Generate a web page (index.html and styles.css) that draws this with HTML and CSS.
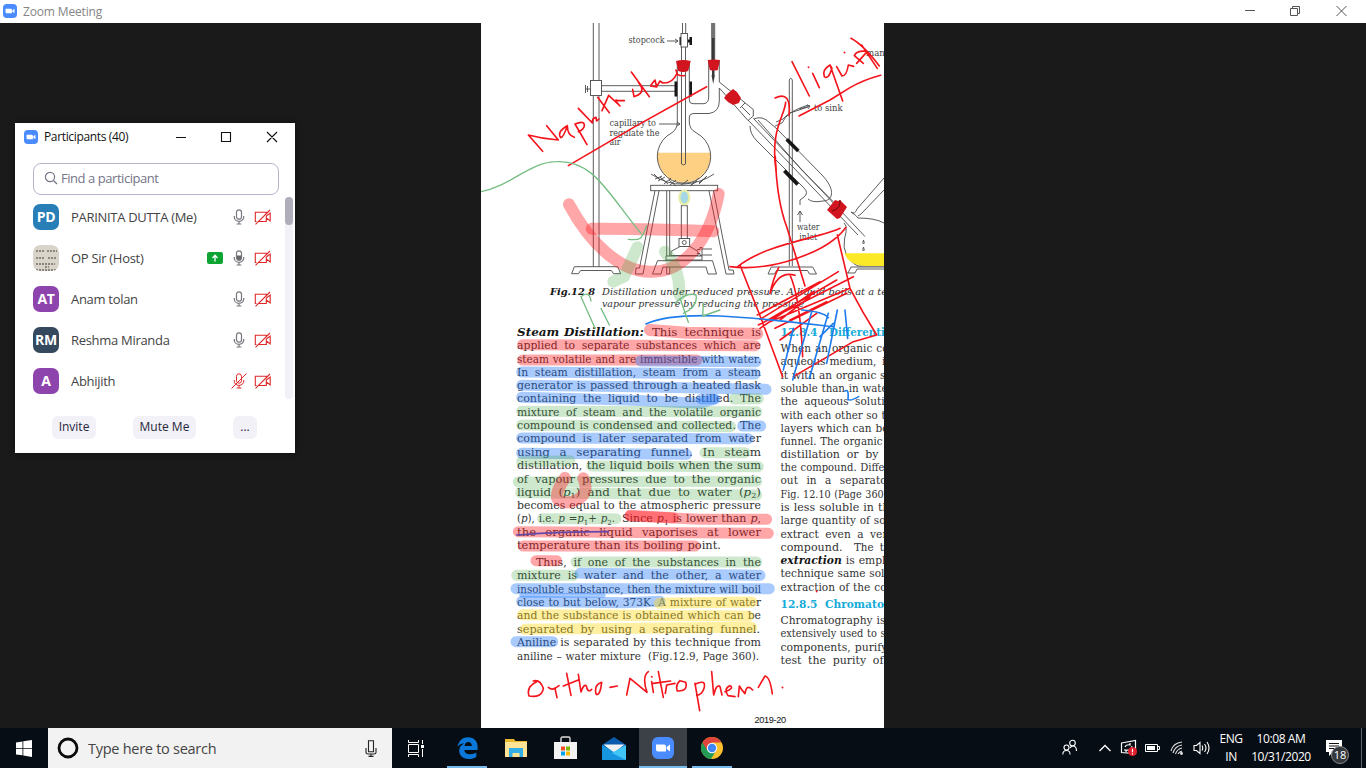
FILE: index.html
```html
<!DOCTYPE html>
<html lang="en">
<head>
<meta charset="utf-8">
<title>Zoom Meeting</title>
<link rel="stylesheet" href="styles.css">
</head>
<body>
<svg class="defs" width="0" height="0">
  <defs>
    <symbol id="zoom" viewBox="0 0 22 22"><rect width="22" height="22" rx="6" fill="#4a8cff"/><path d="M4 7.5h8a2 2 0 0 1 2 2v5H6a2 2 0 0 1-2-2zM14.7 10l3.3-2.4v6.8L14.7 12z" fill="#fff"/></symbol>
    <symbol id="mic" viewBox="0 0 12 16"><g fill="none" stroke="#77777f" stroke-width="1.200"><rect x="3.5" y=".8" width="5" height="9.4" rx="2.5"/><path d="M1.3 7v1.2a4.7 4.2 0 0 0 9.4 0V7M6 12.4v2.4M3.6 15h4.8"/></g></symbol>
    <symbol id="cam-off" viewBox="0 0 18 16"><path d="M2.5 12.5H1.3V3.2h11v2M12.3 7v5.500H5M12.300 7l3.900-3v8l-3.900-3M1.500 15.300L16 1" fill="none" stroke="#e02828" stroke-width="1.100"/></symbol>
  </defs>
</svg>

<header class="titlebar">
  <svg class="title-icon"><use href="#zoom"/></svg>
  <span class="title-text">Zoom Meeting</span>
  <svg class="title-controls" width="112" height="22" viewBox="0 0 112 22" fill="none" stroke="#555"><path d="M4 10.500h10M49.500 8.500h7v7h-7zM51.500 8.500v-2h7v7h-2M95.500 6l10 10M105.500 6l-10 10"/></svg>
</header>

<main class="stage">
<svg class="page" width="403" height="705" viewBox="481 23 403 705">
  <rect x="481" y="23" width="403" height="705" fill="#fff"/>

  <!-- apparatus: stands, tripod and burner -->
  <g class="ink">
    <path d="M593.300 23V267M599 23V267M585.500 85v8M587.500 86v6M585.500 89h5"/><rect x="590.500" y="80.500" width="11" height="15"/>
    <path d="M601.500 85.700H675M601.500 91.300H675"/>
    <path d="M574.300 266.700H617.700L620.700 273.700H613.500L611.500 270.500H580.500L578.500 273.700H571.700Z"/>
    <path d="M655 190.700L639.500 268H636l-.5 6h7.500L659 190.700M666.700 190.700V274h3V190.700M709 190.700L726 274h8l-.8-4H729L713.500 190.700"/>
    <rect x="650.700" y="185.300" width="67" height="5.400"/>
    <path d="M652.500 274l5-13.300h55l4 13.300h-8.500l-2-7h-43l-2 7z"/>
    <rect x="681.300" y="205.700" width="6" height="33"/><rect x="679" y="238.500" width="10.700" height="8"/><circle cx="684.300" cy="242.500" r="2"/>
    <path d="M671 255.500v-4l9-5h10l8 5v4zM666 256h36v4h-36zM697 249.500h3v-2h2v8h-2v-2h-3M702 249h10M702 255h10"/>
    <path d="M789.300 266V80q1.500-3.500 3 0V266M771.300 267H812.700L816.500 274h-7l-2-3.500H776.500L774.500 274H768z"/>
  </g>
  <ellipse cx="684.300" cy="197.500" rx="6" ry="8" fill="#e7eda5"/><ellipse cx="684.300" cy="197.500" rx="3.800" ry="6" fill="#a6d9e5"/>
  <!-- flask, necks and tubes -->
  <path d="M657.500 152.700H710.500A26.700 26.700 0 1 1 657.500 152.700Z" fill="#fdd083"/>
  <g class="ink-open">
    <path d="M677.300 61V122Q677.300 129 672 132.700A26.700 26.700 0 1 0 696 132.700Q689.300 129 689.300 122V117Q689.300 114 693 113.500H709Q719.300 112 719.300 101V88M689.300 61V100Q689.300 103.700 693 103.700H704Q708.700 103 708.700 97V61M719.300 61V82L753.300 109.500V116L748 120.500L719.300 88"/>
    <path d="M681.500 47V164q2 2 4 0V47M682.500 23V34M685.700 23V34M711.700 23V60M714.700 23V60"/>
    <path d="M748 120L858 235M753.300 118.300L865 236.500M758 120L801.700 170L833.300 201.700M754 119Q762 115 770 123L777 129L822 175C837 191 832 201 823 201Q812 203 808 199M750 126Q750 134 757 141L804 188Q809 193 804 197L800 200V205M775 126l7-3q3-6 8-10l18-6M776 122l7-3q7-8 25-14M844 223L846 226Q847 231 844.500 239A24 24 0 0 0 858 266H884M851 212q4 3 6-3L884 178M858 216l3-2L884 190M851 212Q857 216 858 218Q875 218 884 223M742 107l8 8M745 103l-5 5"/>
    <path d="M651 174q16 11 33 10t30-10M655 179l7-3m-4 5l7-4m-1 7l7-6m-1 7l6-5m5 5l7-5m3 5l8-7m0 5l7-6M654 174l6 6m0-3l8 7m1-4l7 6m14 0l7-5m2 3l8-8"/>
    <path d="M800 222V211M797.500 215l2.500-4 2.500 4M848 273l3-6H884M846 273h9l2-4H884"/>
  </g>
  <path d="M844.500 253.300H884V266H867Q849 266 844.500 253.300Z" fill="#fbe827"/>
  <path d="M712 38h2.500v37h-2.500zM711.500 75l1.700 9 1.700-9z" fill="#38383b"/><path d="M712 23h2.500v15h-2.500z" fill="#737375"/>
  <g fill="#171717"><path d="M674.500 81.500h2.800v15h-2.800zM689.500 81.500h2.500v15h-2.500zM679.500 37h2v8h-2zM687.500 39.500h2V37h2.500v8h-2.500v-2.500h-2z"/></g>
  <path class="ink-open" d="M863.500 240q-1.600 4 0 4t0-4M863.500 247q-1.600 4 0 4t0-4"/>
  <rect class="ink" x="681" y="33.500" width="6.500" height="13.500"/>
  <path d="M786.700 139.300L798.300 151M784.300 170.700L797.700 184.500" stroke="#151515" stroke-width="3.600"/>
  <g fill="#d2141e"><path d="M676 61q7-2 14.700 0l-2.500 10q-5 2-10 0zM707.700 60q6-1 12.300 0l-2.200 10q-4 1-8 0zM733 89l4 3 4 6-2 5-6 2-5-3-4-4 3-4zM835 200l3 1 2-1 7 7-7 11-3 1-10-9z"/></g>
  <path d="M832 211q9-2 8-11" fill="none" stroke="#6d0b10"/>
  <path class="arrow" d="M667 41h11m-3-2 3 2-3 2M659 124h21m-3-2 3 2-3 2M799 109l11-3m-3-1 3 1-2 3"/>

  <g class="label">
    <text x="628.500" y="43.300" textLength="36" lengthAdjust="spacingAndGlyphs">stopcock</text><text x="609.500" y="126" textLength="46.500" lengthAdjust="spacingAndGlyphs">capillary to</text><text x="609.500" y="135.600" textLength="50" lengthAdjust="spacingAndGlyphs">regulate the</text><text x="609.500" y="145" textLength="11" lengthAdjust="spacingAndGlyphs">air</text>
    <text x="814" y="111" textLength="28.500" lengthAdjust="spacingAndGlyphs">to sink</text><text x="866" y="55.500">man</text><text x="797" y="230" textLength="22.500" lengthAdjust="spacingAndGlyphs">water</text><text x="799.300" y="240" textLength="18" lengthAdjust="spacingAndGlyphs">inlet</text>
  </g>
  <g class="caption"><text class="bold" x="550" y="294.500" textLength="45" lengthAdjust="spacingAndGlyphs">Fig.12 8</text><text x="602" y="294.500" textLength="285" lengthAdjust="spacingAndGlyphs">Distillation under reduced pressure. A liquid boils at a te</text><text x="602" y="307" textLength="205" lengthAdjust="spacingAndGlyphs">vapour pressure by reducing the pressure.</text></g>

  <!-- left column -->
  <g class="copy">
    <text class="bold ital" x="517" y="335.500" textLength="127" lengthAdjust="spacingAndGlyphs">Steam Distillation:</text><text class="loose" x="652" y="335.500" textLength="109" lengthAdjust="spacingAndGlyphs">This technique is</text>
    <text class="loose" x="517" y="349" textLength="244" lengthAdjust="spacingAndGlyphs">applied to separate substances which are</text>
    <text x="517" y="362.600" textLength="244" lengthAdjust="spacingAndGlyphs">steam volatile and are immiscible with water.</text>
    <text class="loose" x="517" y="375.800" textLength="244" lengthAdjust="spacingAndGlyphs">In steam distillation, steam from a steam</text>
    <text x="517" y="389" textLength="244" lengthAdjust="spacingAndGlyphs">generator is passed through a heated flask</text>
    <text class="loose" x="517" y="402.200" textLength="244" lengthAdjust="spacingAndGlyphs">containing the liquid to be distilled. The</text>
    <text class="loose" x="517" y="415.700" textLength="244" lengthAdjust="spacingAndGlyphs">mixture of steam and the volatile organic</text>
    <text x="517" y="429" textLength="244" lengthAdjust="spacingAndGlyphs">compound is condensed and collected. The</text>
    <text class="loose" x="517" y="442.200" textLength="244" lengthAdjust="spacingAndGlyphs">compound is later separated from water</text>
    <text class="looser" x="517" y="455.700" textLength="244" lengthAdjust="spacingAndGlyphs">using a separating funnel. In steam</text>
    <text x="517" y="469" textLength="244" lengthAdjust="spacingAndGlyphs">distillation, the liquid boils when the sum</text>
    <text class="loose" x="517" y="482.500" textLength="244" lengthAdjust="spacingAndGlyphs">of vapour pressures due to the organic</text>
    <text class="loose" x="517" y="495.800" textLength="244" lengthAdjust="spacingAndGlyphs">liquid (<tspan class="ital">p</tspan><tspan class="sub" dy="2.500">1</tspan><tspan dy="-2.500">) and that due to water (</tspan><tspan class="ital">p</tspan><tspan class="sub" dy="2.500">2</tspan><tspan dy="-2.500">)</tspan></text>
    <text x="517" y="509" textLength="244" lengthAdjust="spacingAndGlyphs">becomes equal to the atmospheric pressure</text>
    <text x="517" y="522.200" textLength="98" lengthAdjust="spacingAndGlyphs">(<tspan class="ital">p</tspan>), i.e. <tspan class="ital">p =p</tspan><tspan class="sub" dy="2.500">1</tspan><tspan class="ital" dy="-2.500">+ p</tspan><tspan class="sub" dy="2.500">2</tspan><tspan dy="-2.500">.</tspan></text>
    <text x="622" y="522.200" textLength="139" lengthAdjust="spacingAndGlyphs">Since <tspan class="ital">p</tspan><tspan class="sub" dy="2.500">1</tspan><tspan dy="-2.500"> is lower than </tspan><tspan class="ital">p</tspan>,</text>
    <text class="looser" x="517" y="535.500" textLength="244" lengthAdjust="spacingAndGlyphs">the organic liquid vaporises at lower</text>
    <text x="517" y="549" textLength="204" lengthAdjust="spacingAndGlyphs">temperature than its boiling point.</text>
    <text class="loose" x="536" y="565.500" textLength="225" lengthAdjust="spacingAndGlyphs">Thus, if one of the substances in the</text>
    <text class="loose" x="517" y="579" textLength="244" lengthAdjust="spacingAndGlyphs">mixture is water and the other, a water</text>
    <text x="517" y="592.500" textLength="244" lengthAdjust="spacingAndGlyphs">insoluble substance, then the mixture will boil</text>
    <text x="517" y="606" textLength="244" lengthAdjust="spacingAndGlyphs">close to but below, 373K. A mixture of water</text>
    <text x="517" y="619" textLength="244" lengthAdjust="spacingAndGlyphs">and the substance is obtained which can be</text>
    <text class="loose" x="517" y="632.500" textLength="243" lengthAdjust="spacingAndGlyphs">separated by using a separating funnel.</text>
    <text x="517" y="646" textLength="244" lengthAdjust="spacingAndGlyphs">Aniline is separated by this technique from</text>
    <text x="517" y="659.700" textLength="124" lengthAdjust="spacingAndGlyphs">aniline – water mixture</text><text x="648" y="659.700" textLength="111" lengthAdjust="spacingAndGlyphs">(Fig.12.9, Page 360).</text>
  </g>
  <!-- right column, cropped by the edge of the shared view -->
  <g class="copy">
    <text class="bold head" x="780.500" y="335.500" textLength="37" lengthAdjust="spacingAndGlyphs">12.8.4</text><text class="bold head" x="829" y="335.500" textLength="56" lengthAdjust="spacingAndGlyphs">Differenti</text>
    <text x="780.500" y="351.700" textLength="108" lengthAdjust="spacingAndGlyphs">When an organic co</text>
    <text x="780.500" y="365.200" textLength="96" lengthAdjust="spacingAndGlyphs">aqueous medium,</text><text x="882" y="365.200">i</text>
    <text x="780.500" y="378.500" textLength="105" lengthAdjust="spacingAndGlyphs">it with an organic s</text>
    <text x="780.500" y="391.800" textLength="107" lengthAdjust="spacingAndGlyphs">soluble than in wate</text>
    <text class="loose" x="780.500" y="405" textLength="104" lengthAdjust="spacingAndGlyphs">the aqueous soluti</text>
    <text x="780.500" y="418.600" textLength="105" lengthAdjust="spacingAndGlyphs">with each other so t</text>
    <text x="780.500" y="431.800" textLength="108" lengthAdjust="spacingAndGlyphs">layers which can be</text>
    <text x="780.500" y="445" textLength="102" lengthAdjust="spacingAndGlyphs">funnel. The organic</text>
    <text class="loose" x="780.500" y="458" textLength="98" lengthAdjust="spacingAndGlyphs">distillation or by</text>
    <text x="780.500" y="471.200" textLength="104" lengthAdjust="spacingAndGlyphs">the compound. Diffe</text>
    <text class="looser" x="780.500" y="484.400" textLength="106" lengthAdjust="spacingAndGlyphs">out in a separato</text>
    <text x="780.500" y="497.800" textLength="107" lengthAdjust="spacingAndGlyphs">Fig. 12.10 (Page 360)</text>
    <text x="780.500" y="511" textLength="109" lengthAdjust="spacingAndGlyphs">is less soluble in th</text>
    <text x="780.500" y="524.300" textLength="105" lengthAdjust="spacingAndGlyphs">large quantity of so</text>
    <text class="loose" x="780.500" y="537.500" textLength="107" lengthAdjust="spacingAndGlyphs">extract even a ver</text>
    <text x="780.500" y="551" textLength="62" lengthAdjust="spacingAndGlyphs">compound.</text><text class="loose" x="854" y="551" textLength="30" lengthAdjust="spacingAndGlyphs">The t</text>
    <text x="780.500" y="564.200" textLength="105" lengthAdjust="spacingAndGlyphs"><tspan class="bold ital">extraction</tspan> is empl</text>
    <text x="780.500" y="577.300" textLength="104" lengthAdjust="spacingAndGlyphs">technique same sol</text>
    <text x="780.500" y="590.500" textLength="106" lengthAdjust="spacingAndGlyphs">extraction of the co</text>
    <text class="bold head" x="780.500" y="607.500" textLength="37" lengthAdjust="spacingAndGlyphs">12.8.5</text><text class="bold head" x="825" y="607.500" textLength="59" lengthAdjust="spacingAndGlyphs">Chromato</text>
    <text x="780.500" y="624" textLength="105" lengthAdjust="spacingAndGlyphs">Chromatography is</text>
    <text x="780.500" y="637.300" textLength="105" lengthAdjust="spacingAndGlyphs">extensively used to s</text>
    <text x="780.500" y="650.700" textLength="107" lengthAdjust="spacingAndGlyphs">components, purify</text>
    <text class="loose" x="780.500" y="664" textLength="103" lengthAdjust="spacingAndGlyphs">test the purity of</text>
  </g>
  <text class="year" x="754.500" y="723" textLength="31.500">2019-20</text>

  <!-- highlighter strokes -->
  <g class="marker" transform="translate(500 310) scale(.33333)">
    <path class="r w36" d="M450 60L560 68L772 71"/><path class="r" d="M68 104L765 107M68 150L590 150"/>
    <path class="b" d="M422 153L768 155M65 186L765 192M65 226L400 230L798 238M65 262L380 270L600 280L645 267"/><path class="b" d="M605 267H640"/>
    <path class="g" d="M702 267L775 266M65 304L770 305M65 345L692 350M615 428L735 428"/>
    <path class="b" d="M728 348H782M65 384L745 386M65 430L560 433"/>
    <path class="g" d="M65 455L210 452M275 468L775 470M55 516L770 514M62 548L770 555M128 626L348 626M228 756L770 756M50 796L220 796"/>
    <path class="r w36" d="M195 504Q160 555 175 570Q200 585 230 570Q270 550 250 505"/>
    <path class="r" d="M390 616L520 623"/><path class="r" d="M390 618L600 628L800 628M55 665L805 670M70 708L585 708M108 752H170"/>
    <path class="b" d="M240 790L780 796M48 836L808 836M65 874L370 878L480 874"/><path class="b thin" d="M65 856H310"/>
    <path class="y" d="M478 880L755 876M68 914L745 918M75 958L755 952"/><path class="b" d="M48 995H158"/>
  </g>
  <g class="marker" transform="translate(480 160) scale(.33333)">
    <path class="r w36" d="M267 133C330 250 420 335 510 335C610 340 690 240 716 102"/><path class="r w36" d="M335 206Q500 205 700 214"/>
    <path class="g w36" d="M472 262L432 350L400 365"/><path class="g w36" d="M555 275Q602 330 598 405"/>
  </g>

  <!-- handwriting -->
  <g class="pen" transform="translate(480 20) scale(.33333)">
    <path d="M188 394L145 345Q190 357 235 360L200 317M262 317Q230 335 242 353Q250 353 262 317Q262 345 283 352M321 374L285 312Q315 300 313 318Q310 330 295 335M295 265L337 309Q335 295 348 292L350 303L357 297M353 232L388 278M366 272L386 226L420 258Q398 235 414 242L433 242M458 208L462 230Q492 222 484 200L475 187M454 156L508 230M512 198L530 201L525 180L513 195M530 200L540 183L548 189Q577 191 590 162M588 150L592 163Q600 168 613 167M265 437L470 317L680 200"/>
  </g>
  <g class="pen" transform="translate(670 20) scale(.33333)">
    <path d="M366 125L418 228M428 160L448 203M415 141l1 1M480 135Q455 150 463 170Q475 180 486 145L480 135L518 243M500 140L516 168Q530 168 535 135L551 139M580 130L553 107Q560 90 592 94L560 130M543 55Q580 75 628 138M575 75L622 145M523 97l1 1M387 288L480 240L540 203Q580 180 632 166M315 234Q365 210 357 287M347 247C345 285 300 330 318 450"/>
  </g>
  <g class="pen" transform="translate(670 160) scale(.33333)">
    <path d="M316 -10Q320 120 350 200L405 378M180 320C300 335 470 280 527 203M203 320C290 250 450 235 510 205M210 315L275 480L338 650M502 225L540 385L578 455L620 525L550 545L370 650M262 465L450 365M270 478L505 335M265 495L550 350M300 485L540 385M315 505L530 400M270 505L430 395M285 485L500 360M330 540L440 460M300 400Q310 355 326 323M300 400Q325 330 375 346M360 345Q390 410 398 590M330 480L420 410M360 480L470 425"/>
  </g>
  <g class="pen" transform="translate(500 580) scale(.33333)">
    <path d="M110 305Q78 320 87 348Q125 355 130 325Q120 297 100 303M145 322Q155 335 177 317M165 325L171 353M200 280L213 346M190 318L235 300M235 283L243 336Q252 310 259 318Q263 340 275 328M302 308Q282 315 288 342Q300 350 305 307M330 322L352 318M380 345L390 295L441 337Q425 290 445 275M455 305L460 337M455 290l1 1M475 275L490 352M460 310L512 303M496 340L500 315L525 310M540 302Q525 315 532 333Q565 334 557 307L540 302M585 310L599 392M585 313Q622 295 611 328Q605 345 590 346M635 275L641 345Q650 310 660 320L666 345M675 335Q704 325 690 317Q670 325 684 347L705 350M715 350L718 318Q725 330 735 341Q740 310 758 330M775 322L795 288Q810 290 817 342M847 322l1 1M950 33v2"/>
  </g>
  <g class="pen bluepen" transform="translate(500 310) scale(.33333)"><path d="M438 42C540 -5 770 24 1000 50M880 55L850 180M935 5L878 210M985 10L928 205M1012 0L980 160M1035 0L1043 85M905 0Q970 5 985 23M960 80L1000 40M1035 243Q1047 235 1044 268Q1050 275 1076 260"/><path class="purple" d="M50 675Q190 665 325 665"/></g>
  <g class="pen greenpen" transform="translate(480 160) scale(.33333)"><path d="M3 95C90 80 150 5 230 5C340 0 380 95 483 220M500 197C485 235 485 243 445 238M345 505L303 410Q328 390 333 423M363 445L388 495M585 430Q620 395 648 405Q655 440 610 460M600 415L625 487M670 430L668 468L720 450"/></g>
</svg>

<section class="participants">
  <div class="win-head"><svg class="win-icon"><use href="#zoom"/></svg><h1>Participants (40)</h1><svg class="win-controls" width="103" height="14" fill="none" stroke="#111" stroke-width="1.100"><path d="M1 7.500h10M46.500 2.500h9v9h-9zM92 2l10 10M102 2L92 12"/></svg></div>
  <div class="search-box"><svg width="14" height="14" fill="none" stroke="#747487" stroke-width="1.200"><circle cx="6" cy="6" r="4.600"/><path d="M9.500 9.500l3.500 3.500"/></svg><span>Find a participant</span></div>
  <div class="list">
    <ul>
      <li><b class="avatar blue">PD</b><span>PARINITA DUTTA (Me)</span><svg class="mic"><use href="#mic"/></svg><svg class="cam"><use href="#cam-off"/></svg></li>
      <li><svg class="avatar" viewBox="0 0 26 26"><rect width="26" height="26" rx="7" fill="#d9d4ca"/><path d="M3 6h8m3 0h10M3 13h8m4 0h9M3 19h19M12 22h4M3 25h20" stroke="#8c877f" stroke-width="2" stroke-dasharray="2 1"/></svg><span>OP Sir (Host)</span>
        <svg class="share" viewBox="0 0 16 12"><rect width="16" height="12" rx="2" fill="#0ea432"/><path d="M8 9.500V3.500M5.500 6L8 3.300 10.500 6" fill="none" stroke="#fff" stroke-width="1.300"/></svg><svg class="mic" viewBox="0 0 12 16"><path d="M3.500 5.500h5V8a2.500 2.500 0 0 1-5 0z" fill="#666"/><use href="#mic" width="12" height="16"/></svg><svg class="cam"><use href="#cam-off"/></svg></li>
      <li><b class="avatar violet">AT</b><span>Anam tolan</span><svg class="mic"><use href="#mic"/></svg><svg class="cam"><use href="#cam-off"/></svg></li>
      <li><b class="avatar navy">RM</b><span>Reshma Miranda</span><svg class="mic"><use href="#mic"/></svg><svg class="cam"><use href="#cam-off"/></svg></li>
      <li><b class="avatar violet">A</b><span>Abhijith</span><svg class="mic muted" viewBox="0 0 16 16"><g fill="none" stroke="#e02828"><rect x="5.500" y=".8" width="5" height="9.400" rx="2.500"/><path d="M3.300 7v1.200a4.700 4.200 0 0 0 9.400 0V7M8 12.400v2.400M5.600 15h4.800M.5 15.500L15.500.5"/></g></svg><svg class="cam"><use href="#cam-off"/></svg></li>
    </ul>
    <div class="scroll"><i></i></div>
  </div>
  <div class="buttons"><button class="invite">Invite</button><button class="mute">Mute Me</button><button class="more">...</button></div>
</section>
</main>

<footer class="taskbar">
  <div class="start"><svg width="16" height="17" fill="#fff"><path d="M0 2.500l6.500-1V8H0zM7.300 1.300L16 0v8H7.300zM0 8.800h6.500v6.500L0 14.400zM7.300 8.800H16V17l-8.700-1.400z"/></svg></div>
  <div class="search"><svg width="22" height="22"><circle cx="11" cy="11" r="9" fill="none" stroke="#0a0a0a" stroke-width="2.800"/></svg><span>Type here to search</span><svg width="12" height="17" fill="none" stroke="#222" stroke-width="1.100"><path d="M3.500.7h5v11h-5zM1 8v4.500Q1 14 3 14h6q2 0 2-1.500V8M6 14v2.300M3.500 16.400h5"/></svg></div>
  <div class="task-view"><svg width="18" height="17" fill="none" stroke="#fff"><path d="M1.500 0v2.500h10V0M1.500 17v-2.500h10V17M1.500 4.500h10v8h-10zM15.500 0v4M15.500 9v8"/><path d="M14 5h3v3h-3z" fill="#fff" stroke="none"/></svg></div>
  <div class="apps">
    <div class="app open"><svg width="21" height="22"><path d="M.5 10C2 3 6 .2 11 .2c6 0 9.600 4 9.600 9.500V13H7.300c.3 3 2.800 4.300 5.700 4.300 2.600 0 4.700-.7 6.300-1.700v4.300C17.500 21 14.500 22 11.400 22 5.700 22 2.200 18.500 2.200 13.600c0-3.300 2-5.900 5-7.200C4 6.200 1.800 7.800.5 10zM7.500 9h7.400c0-2.300-1.200-4-3.400-4-2.300 0-3.600 1.500-4 4z" fill="#0b78d9"/></svg></div>
    <div class="app"><svg width="22" height="20"><path d="M0 1h9l1.500 2H22v16H0z" fill="#e8b72c"/><path d="M0 4h22v15H0z" fill="#ffe394"/><path d="M4 10h14v9h-3.500v-4h-7v4H4z" fill="#31aee5"/></svg></div>
    <div class="app"><svg width="23" height="24"><path d="M7 8V2.500Q7 1 8.500 1h6Q16 1 16 2.500V8" fill="none" stroke="#ddd" stroke-width="1.400"/><path d="M0 6h23v17H0z" fill="#f3f3f3"/><path d="M7 10.500h4v4H7z" fill="#f25022"/><path d="M12 10.500h4v4h-4z" fill="#7fba00"/><path d="M7 15.500h4v4H7z" fill="#00a4ef"/><path d="M12 15.500h4v4h-4z" fill="#ffb900"/></svg></div>
    <div class="app"><svg width="24" height="23"><path d="M0 8L12 0l12 8v15H0z" fill="#0b5cad"/><path d="M1.500 7.500h21L12 16z" fill="#f3f3f3"/><path d="M0 8l12 7 12-7v15H0z" fill="#1796df"/><path d="M24 8L10 16l14 7z" fill="#40c6f4"/></svg></div>
    <div class="app open active"><svg width="22" height="22"><use href="#zoom"/></svg></div>
    <div class="app open"><svg width="22" height="22"><circle cx="11" cy="11" r="11" fill="#fbc02d"/><path d="M11 11L1.500 5.500A11 11 0 0 0 10 22l5.500-9z" fill="#239b56"/><path d="M1.500 5.500A11 11 0 0 1 20.500 5.500H11L6 13z" fill="#e0443a"/><circle cx="11" cy="11" r="5.200" fill="#fff"/><circle cx="11" cy="11" r="4.200" fill="#4285f4"/></svg></div>
  </div>
  <div class="tray">
    <div class="people"><svg width="16" height="18" fill="none" stroke="#fff" stroke-width="1.100"><circle cx="10.500" cy="4" r="2.800"/><circle cx="4.500" cy="8.500" r="2.500"/><path d="M.8 15.500q0-4 3.700-4t3.500 4M8 9q1-2 3-2 3.500 0 3.500 5"/></svg></div>
    <div class="ico"><svg width="12" height="8" fill="none" stroke="#fff" stroke-width="1.300"><path d="M.5 7L6 1.500 11.500 7"/></svg></div>
    <div class="ico"><svg width="18" height="18" fill="none" stroke="#fff" stroke-width="1.200"><path d="M1.500 4l14-2.500v13l-14-1zM5 8q1-3 5-2V4M12 7q-1 5-6 4v2M6 11H4"/><circle cx="12.500" cy="12.500" r="4.500" fill="#e01f2d" stroke="none"/><path d="M12.500 9.800v3.400M12.500 14.300v1.200"/></svg></div>
    <div class="ico"><svg width="16" height="10"><path d="M.5 1.500h12v7H.5zM12.500 3.500h2v3h-2" fill="none" stroke="#fff"/><path d="M2 3h8v4H2z" fill="#fff"/></svg></div>
    <div class="ico"><svg width="14" height="14" fill="none" stroke="#ddd" stroke-width="1.100"><path d="M1 10Q3 2 12 1M3 12Q5 5 12 4M5.500 13Q7 8 12 7M8 13Q9 11 12 10"/><circle cx="11.500" cy="12.500" r=".9" fill="#fff"/></svg></div>
    <div class="ico"><svg width="17" height="14" fill="none" stroke="#fff" stroke-width="1.100"><path d="M1 4.500h2.500L7 1.500v11L3.500 9.500H1zM9 4.500q1.500 2.500 0 5M11.500 3q3 4 0 8M14 1q4 6 0 12"/></svg></div>
    <div class="lang">ENG<br>IN</div>
    <div class="clock">10:08 AM<br>10/31/2020</div>
    <div class="notice"><svg width="16" height="17"><path d="M0 0h16v12H7l-4 4v-4H0z" fill="#fff"/><path d="M3 3.500h10M3 6h10M3 8.500h7" stroke="#111"/></svg><span class="count">18</span></div>
  </div>
</footer>
</body>
</html>
```

FILE: styles.css
```css
* { box-sizing: border-box; }
body { margin: 0; width: 1366px; height: 768px; overflow: hidden; display: flex; flex-direction: column; background: #1a1a1a; font-family: "Open Sans", "Noto Sans", sans-serif; }
svg { display: block; flex: none; }
.defs { position: absolute; }

.titlebar { height: 23px; flex: none; display: flex; align-items: center; padding: 0 13px 1px 3px; background: #fff; }
.title-icon { width: 14px; height: 14px; margin-right: 6px; }
.title-text { font: 12px "Open Sans", sans-serif; color: #858585; letter-spacing: -.15px; }
.title-controls { margin-left: auto; }

.stage { height: 705px; flex: none; display: flex; padding-left: 481px; }
.page text { font-family: "DejaVu Serif", serif; }
.ink, .ink-open, .arrow { stroke: #4b4b4b; stroke-width: .9; }
.ink { fill: #fff; }
.ink-open, .arrow { fill: none; }
.label { font-size: 8.6px; fill: #444; }
.caption { font-size: 9.6px; font-style: italic; fill: #333; }
.copy { font-size: 10.3px; fill: #333; word-spacing: .5px; }
.loose { word-spacing: 3px; }
.looser { word-spacing: 5px; }
.bold { font-weight: bold; fill: #151515; }
.ital { font-style: italic; }
.sub { font-size: 7px; }
.head { fill: #16acd9; }
.page .year { font: 9.2px "Liberation Sans", sans-serif; fill: #111; }
.marker { fill: none; stroke-width: 33; stroke-linecap: round; stroke-linejoin: round; }
.marker .w36 { stroke-width: 36; }
.marker .thin { stroke-width: 14; }
.r { stroke: rgba(255, 20, 30, .38); }
.b { stroke: rgba(30, 115, 250, .38); }
.g { stroke: rgba(65, 165, 65, .26); }
.y { stroke: rgba(255, 215, 20, .40); }
.pen { fill: none; stroke: #f4141c; stroke-width: 4.9; stroke-linecap: round; stroke-linejoin: round; }
.bluepen { stroke: #1f7ced; }
.purple { stroke: #6548a8; }
.greenpen { stroke: #75bd82; stroke-width: 4; }

.participants { position: absolute; left: 15px; top: 123px; width: 280px; height: 330px; background: #fff; box-shadow: 0 0 5px #0008; display: flex; flex-direction: column; }
.win-head { height: 40px; flex: none; display: flex; align-items: center; padding: 0 17px 12px 9px; }
.win-icon { width: 14px; height: 14px; margin-right: 6px; }
.win-head h1 { margin: 0; font: 12px/16px "Open Sans", sans-serif; color: #111; letter-spacing: -.35px; }
.win-controls { margin-left: auto; }
.search-box { height: 32px; flex: none; margin: 0 16px 0 18px; padding: 0 10px 2px; border: 1px solid #b6b3cc; border-radius: 8px; display: flex; align-items: center; gap: 3px; color: #747487; font-size: 13px; letter-spacing: -.45px; }
.list { height: 202px; flex: none; display: flex; justify-content: space-between; padding: 2px 2px 0 18px; }
.list ul { list-style: none; width: 239px; margin: 0; padding: 0; }
.list li { height: 41px; display: flex; align-items: center; color: #444; font-size: 13px; letter-spacing: -.3px; padding-bottom: 1px; }
.list li > span { flex: 1; }
.avatar { width: 26px; height: 26px; margin-right: 12px; border-radius: 7px; color: #fff; font-size: 14px; font-weight: 700; line-height: 26px; text-align: center; letter-spacing: -.3px; }
.blue { background: #287fb8; }
.violet { background: #8e44ad; }
.navy { background: #34495e; }
.mic { width: 12px; height: 16px; }
.mic.muted { width: 16px; margin-right: -2px; }
.cam { width: 18px; height: 16px; margin-left: 9px; }
.share { width: 16px; height: 12px; margin-right: 10px; }
.scroll { width: 8px; height: 202px; background: #f2f1f7; border-radius: 4px; }
.scroll i { display: block; height: 28px; background: #b0aebb; border-radius: 4px; }
.buttons { display: flex; padding: 19px 0 0 37px; }
.buttons button { height: 23px; padding: 0 0 2px; border: 0; border-radius: 6px; background: #f2f1f7; color: #26263a; font: 12px "Open Sans", sans-serif; }
.invite { width: 44px; margin-right: 37px; }
.mute { width: 63px; margin-right: 37px; }
.more { width: 24px; }

.taskbar { height: 40px; flex: none; display: flex; background: #070d14; color: #fff; }
.start, .task-view { width: 48px; display: flex; align-items: center; justify-content: center; }
.search { width: 344px; display: flex; align-items: center; padding: 0 15px 0 9px; background: #f2f2f2; color: #444; font-size: 14.5px; }
.search span { flex: 1; margin-left: 9px; letter-spacing: -.27px; }
.apps { display: flex; gap: 1px; margin-left: 3px; }
.app { width: 48px; display: flex; align-items: center; justify-content: center; }
.app.open { background: linear-gradient(#76b9ed, #76b9ed) center bottom / 40px 2px no-repeat; }
.app.active { background: linear-gradient(#76b9ed, #76b9ed) center bottom / 48px 2px no-repeat, #3c4147; }
.tray { margin-left: auto; display: flex; align-items: center; padding-right: 4px; height: 40px; }
.people { width: 34px; margin-right: 6px; display: flex; justify-content: center; }
.ico { width: 24px; display: flex; justify-content: center; }
.lang, .clock { text-align: center; font: 12px/18px "Open Sans", sans-serif; letter-spacing: -.4px; }
.lang { width: 36px; }
.clock { width: 64px; }
.notice { width: 49px; height: 40px; padding: 12px 0 0 13px; border-right: 1px solid #60656a; position: relative; }
.count { position: absolute; left: 18px; top: 18px; width: 18px; height: 18px; border-radius: 50%; border: 1px solid #888; background: #34373b; font: 11px/16px "Open Sans", sans-serif; text-align: center; }
```
